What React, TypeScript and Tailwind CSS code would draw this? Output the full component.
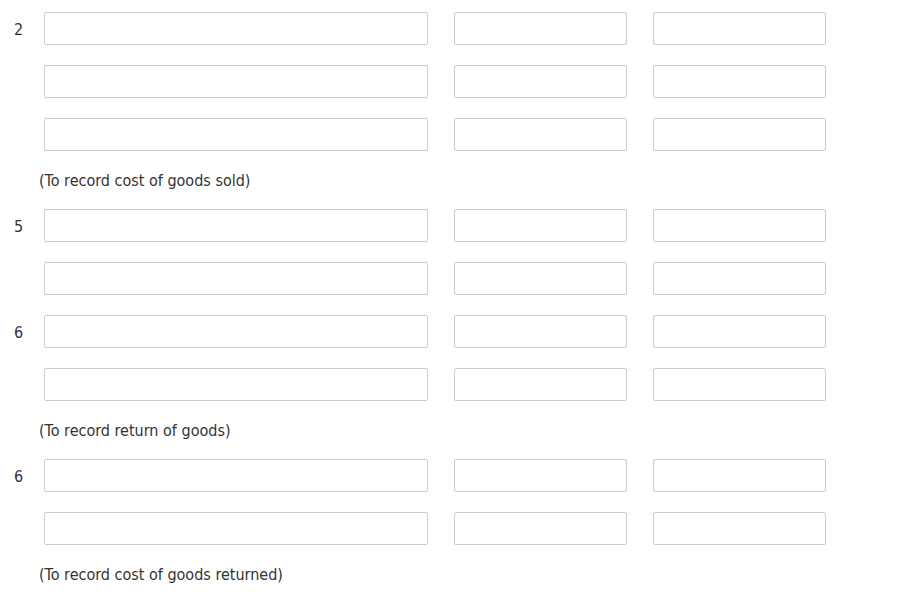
const groups: { rows: string[]; note: string }[] = [
  { rows: ['2', '', ''], note: '(To record cost of goods sold)' },
  { rows: ['5', '', '6', ''], note: '(To record return of goods)' },
  { rows: ['6', ''], note: '(To record cost of goods returned)' },
];

function EntryRow({ num }: { num: string }) {
  return (
    <div className="flex items-center h-[33px]">
      <div className="w-[44px] pl-[14px] pt-[2px] text-[16px] text-[#333]">{num}</div>
      <input className="w-[384px] h-[33px] border border-[#ccc] rounded-[2px] bg-white" />
      <input className="w-[173px] h-[33px] ml-[26px] border border-[#ccc] rounded-[2px] bg-white" />
      <input className="w-[173px] h-[33px] ml-[26px] border border-[#ccc] rounded-[2px] bg-white" />
    </div>
  );
}

export default function App() {
  return (
    <div
      className="min-h-screen bg-white pt-[12px]"
      style={{ fontFamily: '"DejaVu Sans Condensed", "DejaVu Sans", sans-serif' }}
    >
      {groups.map((g, i) => (
        <div key={i}>
          <div className="flex flex-col gap-[20px]">
            {g.rows.map((n, j) => (
              <EntryRow key={j} num={n} />
            ))}
          </div>
          <div className="h-[58px] flex items-center pl-[39px] pt-[2px] text-[16px] text-[#333]">{g.note}</div>
        </div>
      ))}
    </div>
  );
}
